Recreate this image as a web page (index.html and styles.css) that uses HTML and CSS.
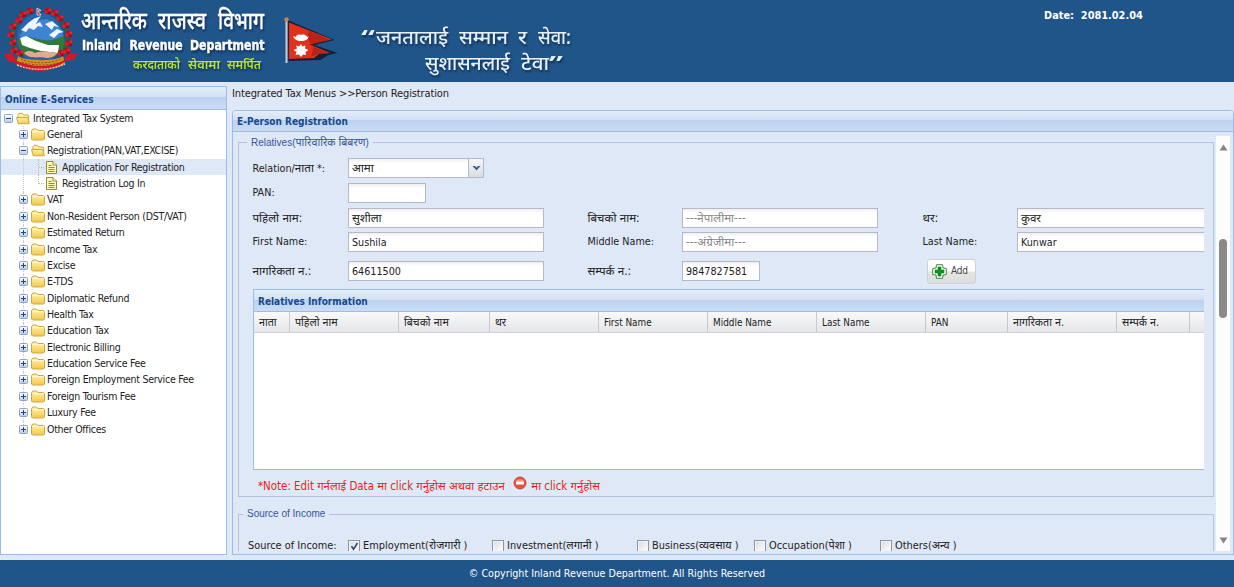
FILE: index.html
```html
<!DOCTYPE html>
<html lang="ne">
<head>
<meta charset="utf-8">
<title>Integrated Tax System</title>
<link rel="stylesheet" href="styles.css">
</head>
<body>
<svg class="defs" width="0" height="0">
  <defs>
    <linearGradient id="gold" x1="0" y1="0" x2="0" y2="1"><stop offset="0" stop-color="#fff3a8"/><stop offset="1" stop-color="#f3c94c"/></linearGradient>
    <linearGradient id="box" x1="0" y1="0" x2="0" y2="1"><stop offset="0" stop-color="#ffffff"/><stop offset="1" stop-color="#b9cbe2"/></linearGradient>
    <symbol id="plus" viewBox="0 0 9 9"><rect x=".5" y=".5" width="8" height="8" rx="1" fill="url(#box)" stroke="#8ca4c4"/><path d="M2 4.500h5M4.500 2v5" stroke="#24467c" fill="none"/></symbol>
    <symbol id="minus" viewBox="0 0 9 9"><rect x=".5" y=".5" width="8" height="8" rx="1" fill="url(#box)" stroke="#8ca4c4"/><path d="M2 4.500h5" stroke="#24467c" fill="none"/></symbol>
    <symbol id="folder" viewBox="0 0 14 13"><path d="M.5 11V2.800L1.800 1h3.700L7 2.500h5.500l1 1v7.500l-1 1H1.500z" fill="url(#gold)" stroke="#d0a548"/><path d="M1.500 3.700h11" stroke="#fffbd8" fill="none"/></symbol>
    <symbol id="open" viewBox="0 0 14 13"><path d="M2 6V2.500l1-1.200h3.200L7.600 3H12l.7 1v7" fill="#fff0a6" stroke="#d0a548"/><path d="M.6 5.500h11l1.700 6.200H2.200z" fill="url(#gold)" stroke="#d0a548"/></symbol>
    <symbol id="leaf" viewBox="0 0 11 13"><path d="M.5.5h6.500L10.500 4v8.500H.5z" fill="#fbf8b4" stroke="#8f8b42"/><path d="M7 .5V4h3.500" fill="#fff" stroke="#8f8b42"/><path d="M2.500 4.500h3M2.500 6.500h6M2.500 8.500h6M2.500 10.500h6" stroke="#8d8950" fill="none"/></symbol>
    <g id="bloom"><circle r="3.200" fill="#b5121f"/><circle cx="-2.200" cy="1" r="1.700" fill="#d62030"/><circle cx="1.800" cy="-1.200" r="1.600" fill="#dd2536"/><circle cx="1.500" cy="2" r="1.300" fill="#8f101b"/></g>
  </defs>
</svg>

<header class="banner">
  <svg class="brand" viewBox="0 0 600 82" width="600" height="82">
    <g>
      <ellipse cx="40" cy="38" rx="23" ry="25" fill="#2565ad"/>
      <path d="M19 36L29 22l6-4 5 2 7-1 6 4 9 7 2 8-24 4z" fill="#3f83d4"/>
      <path d="M21 30l7-7 7-5 3 2-2 4 4-2 3 5-5-1-4 4-5-2-3 4zM45 24l7-3 7 6-5-1-2 4zM49 35l8-6 7 3-5 1-5 5zM36 18l5-2-6 8z" fill="#eef5fc"/>
      <path d="M17 41l8-5 13 3 12 2 14-5 1 12-11 9-30-1z" fill="#2f7a3b"/>
      <path d="M20 38l6-2 10 5 12 4 11 0-1 8-8-1-9-1-11-3-8-3z" fill="#fff"/>
      <path d="M24 53c4-3 8-2 11 0 5-2 14-1 22 0-2 4-7 5-11 5-7-2-16 2-22-5z" fill="#e9a691"/>
      <path d="M18 56c5 5 38 6 45 0l2 8c-10 6-38 6-49 0z" fill="#d9901c"/>
      <path d="M21 59c9 5 31 5 40 0M22 62c10 4 30 4 38 0" stroke="#7f5510" stroke-width="1" stroke-dasharray="2 1.500" fill="none"/>
      <path d="M16 50C10 38 13 19 29 12M64 50c7-12 3-31-13-38" stroke="#24623a" stroke-width="3" fill="none"/>
      <use href="#bloom" x="30" y="11"/><use href="#bloom" x="23" y="14"/><use href="#bloom" x="19" y="20"/><use href="#bloom" x="13" y="26"/><use href="#bloom" x="11" y="34"/><use href="#bloom" x="13" y="42"/><use href="#bloom" x="14" y="50"/><use href="#bloom" x="20" y="53"/>
      <use href="#bloom" x="48" y="11"/><use href="#bloom" x="55" y="13"/><use href="#bloom" x="60" y="18"/><use href="#bloom" x="66" y="25"/><use href="#bloom" x="69" y="34"/><use href="#bloom" x="69" y="43"/><use href="#bloom" x="67" y="51"/><use href="#bloom" x="61" y="53"/>
      <path d="M37 8l4 2.500-3 .5 3 4h-4z" fill="#d7263c" stroke="#fff" stroke-width=".7"/>
      <path d="M4 54l8-1 5 8q24 10 46 0l7-8 8 1-5 6-7 1q-26 19-51 2l-7-2z" fill="#cf1a28"/>
      <path d="M17 65q24 9 48-1" stroke="#f6b9b5" stroke-width="1.500" stroke-dasharray="2 1" fill="none"/>
    </g>
    <g>
      <path d="M287.500 20l47 20-20 5 23 8-9 2-8 5-32 1z" fill="#142038"/>
      <path d="M289 22.500l43 17-22 5 20 8.500-11 1-5 4-25 1z" fill="#e2301d"/>
      <path d="M293 36l3 1c0-2 2-3 5-2 3-1 5 0 6 2l2-1c0 3-4 5-8 5s-7-2-8-5zM301 44l1.500 2.500 3-1-.5 3 3.500 1.500-3 2 .5 3-3-.5-2 2.500-2-2.500-3.500.5 1-3-3-2 3.500-1.500-1-3 3 1z" fill="#fff"/>
      <path d="M309 31q-4 10 5 14l-3 12 7-3 9-1-17-8 20-5z" fill="#8c160e" opacity=".5"/>
      <path d="M286.500 20v43" stroke="#c9cbd4" stroke-width="2"/><circle cx="286.500" cy="19.500" r="2.200" fill="#c48650"/>
    </g>
    <g class="shade">
      <text class="t-dept" x="81" y="29" textLength="66" lengthAdjust="spacingAndGlyphs">आन्तरिक</text>
      <text class="t-dept" x="158" y="29" textLength="48" lengthAdjust="spacingAndGlyphs">राजस्व</text>
      <text class="t-dept" x="218" y="29" textLength="46" lengthAdjust="spacingAndGlyphs">विभाग</text>
      <text class="t-en" x="82" y="49.500" textLength="39" lengthAdjust="spacingAndGlyphs">Inland</text>
      <text class="t-en" x="129.500" y="49.500" textLength="53" lengthAdjust="spacingAndGlyphs">Revenue</text>
      <text class="t-en" x="190" y="49.500" textLength="74.500" lengthAdjust="spacingAndGlyphs">Department</text>
      <text class="t-motto" x="133" y="69" textLength="47" lengthAdjust="spacingAndGlyphs">करदाताको</text>
      <text class="t-motto" x="188" y="69" textLength="32" lengthAdjust="spacingAndGlyphs">सेवामा</text>
      <text class="t-motto" x="227" y="69" textLength="34" lengthAdjust="spacingAndGlyphs">समर्पित</text>
      <text class="t-quote" x="361" y="44" textLength="14" lengthAdjust="spacingAndGlyphs">‘‘</text>
      <text class="t-quote" x="376" y="44" textLength="72" lengthAdjust="spacingAndGlyphs">जनतालाई</text>
      <text class="t-quote" x="459" y="44" textLength="49" lengthAdjust="spacingAndGlyphs">सम्मान</text>
      <text class="t-quote" x="518" y="44" textLength="9" lengthAdjust="spacingAndGlyphs">र</text>
      <text class="t-quote" x="538" y="44" textLength="33" lengthAdjust="spacingAndGlyphs">सेवा:</text>
      <text class="t-quote" x="425" y="70" textLength="85" lengthAdjust="spacingAndGlyphs">सुशासनलाई</text>
      <text class="t-quote" x="521" y="70" textLength="28" lengthAdjust="spacingAndGlyphs">टेवा</text>
      <text class="t-quote" x="549" y="70" textLength="14" lengthAdjust="spacingAndGlyphs">’’</text>
    </g>
  </svg>
  <div class="date">Date:&nbsp; 2081.02.04</div>
</header>

<div class="work">
  <aside class="side">
    <h2 class="bar">Online E-Services</h2>
    <ul class="tree">
      <li class="root"><svg class="tg"><use href="#minus"/></svg><svg class="fd"><use href="#open"/></svg>Integrated Tax System</li>
      <li><svg class="tg"><use href="#plus"/></svg><svg class="fd"><use href="#folder"/></svg>General</li>
      <li><svg class="tg"><use href="#minus"/></svg><svg class="fd"><use href="#open"/></svg>Registration(PAN,VAT,EXCISE)</li>
      <li class="leaf on"><i></i><svg class="lf"><use href="#leaf"/></svg>Application For Registration</li>
      <li class="leaf last"><i></i><svg class="lf"><use href="#leaf"/></svg>Registration Log In</li>
      <li><svg class="tg"><use href="#plus"/></svg><svg class="fd"><use href="#folder"/></svg>VAT</li>
      <li><svg class="tg"><use href="#plus"/></svg><svg class="fd"><use href="#folder"/></svg>Non-Resident Person (DST/VAT)</li>
      <li><svg class="tg"><use href="#plus"/></svg><svg class="fd"><use href="#folder"/></svg>Estimated Return</li>
      <li><svg class="tg"><use href="#plus"/></svg><svg class="fd"><use href="#folder"/></svg>Income Tax</li>
      <li><svg class="tg"><use href="#plus"/></svg><svg class="fd"><use href="#folder"/></svg>Excise</li>
      <li><svg class="tg"><use href="#plus"/></svg><svg class="fd"><use href="#folder"/></svg>E-TDS</li>
      <li><svg class="tg"><use href="#plus"/></svg><svg class="fd"><use href="#folder"/></svg>Diplomatic Refund</li>
      <li><svg class="tg"><use href="#plus"/></svg><svg class="fd"><use href="#folder"/></svg>Health Tax</li>
      <li><svg class="tg"><use href="#plus"/></svg><svg class="fd"><use href="#folder"/></svg>Education Tax</li>
      <li><svg class="tg"><use href="#plus"/></svg><svg class="fd"><use href="#folder"/></svg>Electronic Billing</li>
      <li><svg class="tg"><use href="#plus"/></svg><svg class="fd"><use href="#folder"/></svg>Education Service Fee</li>
      <li><svg class="tg"><use href="#plus"/></svg><svg class="fd"><use href="#folder"/></svg>Foreign Employment Service Fee</li>
      <li><svg class="tg"><use href="#plus"/></svg><svg class="fd"><use href="#folder"/></svg>Foreign Tourism Fee</li>
      <li><svg class="tg"><use href="#plus"/></svg><svg class="fd"><use href="#folder"/></svg>Luxury Fee</li>
      <li><svg class="tg"><use href="#plus"/></svg><svg class="fd"><use href="#folder"/></svg>Other Offices</li>
    </ul>
  </aside>

  <main class="main">
    <div class="crumb">Integrated Tax Menus &gt;&gt;Person Registration</div>
    <section class="panel">
      <h2 class="bar">E-Person Registration</h2>
      <div class="body">
        <div class="scroll">
          <fieldset class="rel">
            <legend>Relatives(<span>पारिवारिक बिबरण</span>)</legend>
            <div class="form">
              <label>Relation/<span class="dev">नाता</span> *:</label><div class="combo"><span class="fld dev">आमा</span><b><svg width="9" height="7" viewBox="0 0 9 7"><path d="M.5 1h2.500l1.500 1.500L6 1h2.500L4.500 5.500z" fill="#3b5a8c"/></svg></b></div><span class="fill"></span>
              <label>PAN:</label><span class="fld short"></span><span class="fill"></span>
              <label class="dev">पहिलो नाम:</label><span class="fld dev">सुशीला</span><label class="dev">बिचको नाम:</label><span class="fld dev hint">---नेपालीमा---</span><label class="dev">थर:</label><span class="fld dev wide">कुवर</span>
              <label>First Name:</label><span class="fld">Sushila</span><label>Middle Name:</label><span class="fld dev hint">---अंग्रेजीमा---</span><label>Last Name:</label><span class="fld wide">Kunwar</span>
              <label class="dev">नागरिकता न.:</label><span class="fld">64611500</span><label class="dev">सम्पर्क न.:</label><span class="fld short">9847827581</span>
              <div class="btn"><svg width="15" height="15" viewBox="0 0 15 15"><path d="M4.500.7h6l.5 3.300 3.300.5v6l-3.300.5-.5 3.300h-6L4 11l-3.300-.5v-6L4 4z" fill="#fff" stroke="#3a8a3f" stroke-linejoin="round"/><path d="M6 3h3v3h3v3H9v3H6V9H3V6h3z" fill="#109618" stroke="#0a7a12" stroke-width=".6"/></svg>Add</div>
            </div>
            <div class="grid">
              <h2 class="bar">Relatives Information</h2>
              <div class="cols"><span class="dev">नाता</span><span class="dev">पहिलो नाम</span><span class="dev">बिचको नाम</span><span class="dev">थर</span><span>First Name</span><span>Middle Name</span><span>Last Name</span><span>PAN</span><span class="dev">नागरिकता न.</span><span class="dev">सम्पर्क न.</span></div>
              <div class="rows"></div>
            </div>
            <p class="note">*Note: Edit गर्नलाई Data मा click गर्नुहोस अथवा हटाउन <svg width="14" height="14" viewBox="0 0 14 14"><circle cx="7" cy="7" r="6" fill="#e8523e" stroke="#c9483a"/><path d="M2.500 5.500a5 4 0 0 1 9 0z" fill="#f59b86"/><rect x="3" y="5.500" width="8" height="3" rx=".5" fill="#fff"/></svg> मा click गर्नुहोस</p>
          </fieldset>
          <fieldset class="src">
            <legend>Source of Income</legend>
            <div class="checks">
              <label>Source of Income:</label>
              <span><i class="cb"><svg width="9" height="9" viewBox="0 0 9 9"><path d="M1.500 4.200l2 3L7.500 1" fill="none" stroke="#2d4a83" stroke-width="1.600"/></svg></i>Employment(रोजगारी )</span>
              <span><i class="cb"></i>Investment(लगानी )</span>
              <span><i class="cb"></i>Business(व्यवसाय )</span>
              <span><i class="cb"></i>Occupation(पेशा )</span>
              <span><i class="cb"></i>Others(अन्य )</span>
            </div>
          </fieldset>
        </div>
        <div class="track"><svg width="9" height="7" viewBox="0 0 9 7"><path d="M4.500.5L8.500 6.500H.5z" fill="#858585"/></svg><div class="thumb"></div><svg class="down" width="9" height="7" viewBox="0 0 9 7"><path d="M4.500 6.500L8.500.5H.5z" fill="#858585"/></svg></div>
      </div>
    </section>
  </main>
</div>
<footer class="foot">© Copyright Inland Revenue Department. All Rights Reserved</footer>
</body>
</html>
```
FILE: styles.css
```css
* { box-sizing: border-box; }
body {
  margin: 0;
  width: 1234px;
  height: 587px;
  overflow: hidden;
  display: flex;
  flex-direction: column;
  background: #dfe8f6;
  font: 10.700px/16px "DejaVu Sans Condensed", "Noto Sans", sans-serif;
  color: #222;
  white-space: nowrap;
}
svg { flex: none; }
.defs { position: absolute; }
.dev { font-size: 11.600px; }

.banner { flex: none; height: 82px; background: #20558a; display: flex; justify-content: space-between; }
.brand { display: block; }
.date { width: 190px; padding-top: 8px; color: #fff; font-weight: bold; font-size: 10.900px; }
.shade { filter: drop-shadow(1px 2px 1px rgba(0, 20, 50, .6)); fill: #fff; }
.t-dept { font: 500 24px "Noto Sans", sans-serif; stroke: #fff; stroke-width: .3px; }
.t-en { font: bold 14px "DejaVu Sans Condensed", sans-serif; stroke: #fff; stroke-width: .4px; }
.t-motto { font: 600 13px "Noto Sans", sans-serif; fill: #b6e62e; }
.t-quote { font: 500 19px "Noto Sans", sans-serif; fill: #e8f1fb; }

.work { flex: none; height: 478px; display: flex; }
.bar {
  margin: 0;
  flex: none;
  height: 23px;
  padding: 2px 4px 0;
  font-size: 10px;
  line-height: 20px;
  color: #15498b;
  border-bottom: 1px solid #99bce8;
  background: linear-gradient(#e3edfa 0, #d3e1f4 45%, #bcd2ef 47%, #c9dcf5 100%);
}

.side { width: 227px; height: 469px; margin-top: 4px; border: 1px solid #99bce8; background: #fff; }
.side .bar { line-height: 21px; }
.tree { list-style: none; margin: 0; padding: 0; font-size: 10.500px; letter-spacing: -.28px; }
.tree li { display: flex; align-items: center; height: 16.370px; line-height: 15px; padding: 0 0 0 18px; position: relative; }
.tree li.root { padding-left: 3px; }
.tree li:not(.root)::before { content: ""; position: absolute; left: 22px; top: 0; bottom: 0; border-left: 1px dotted #ccc; }
.tree li:last-child::before { bottom: 8px; }
.tg { width: 9px; height: 9px; margin-right: 3px; position: relative; }
.fd { width: 14px; height: 13px; margin-right: 2px; }
.root .fd { margin-right: 3px; }
.lf { width: 11px; height: 13px; margin-right: 5px; }
.tree li.leaf { padding-left: 37px; }
.leaf i { width: 6px; height: 16px; margin-right: 2px; border-left: 1px dotted #bbb; background: linear-gradient(90deg, #bbb 50%, transparent 50%) 0 8px / 2px 1px repeat-x; }
.leaf.last i { height: 9px; align-self: flex-start; }
.tree li.on { background: #dfe8f6; }

.main { flex: 1; padding: 4px 0 0 5px; }
.crumb { height: 24px; font-size: 11px; letter-spacing: -.13px; line-height: 15px; }
.panel { height: 445px; border: 1px solid #99bce8; border-radius: 4px 4px 0 0; overflow: hidden; }
.panel > .bar { height: 21px; line-height: 18px; }
.body { height: 419px; padding-top: 4px; display: flex; justify-content: space-between; }
.scroll { width: 976px; margin-left: 5px; overflow: hidden; }
fieldset { margin: 0; min-width: 0; border: 1px solid #b5c3da; }
legend { height: 12px; padding: 0 4px; font: 10px/12px "Liberation Sans", "Noto Sans", sans-serif; color: #36559a; }
legend span { font-size: 10.700px; }
.rel { height: 361px; padding: 8px 9px 0 13px; overflow: hidden; }
.rel legend { margin-left: -5px; }
.form { display: grid; grid-template-columns: 96px 239px 95px 240px 95px 187px; grid-template-rows: 24px 25px 25px 24px 34px; align-items: center; width: 952px; overflow: hidden; }
.form label { padding-left: .5px; }
.fill { grid-column: 3 / -1; }
.fld { display: block; width: 196px; height: 20px; padding: 0 3px; line-height: 19px; border: 1px solid #b5b8c8; background: linear-gradient(#efefef, #fff 4px); }
.fld.short { width: 78px; }
.hint { color: #888; }
.combo { display: flex; }
.combo .fld { width: 121px; }
.combo b { width: 15px; height: 20px; display: grid; place-items: center; border: 1px solid #b5b8c8; border-left: 0; background: linear-gradient(#f7f7f7, #d8dde6); }
.btn { width: 49px; height: 25px; margin-left: 5px; padding-left: 4px; display: flex; align-items: center; gap: 4px; color: #444; font-size: 10px; letter-spacing: -.2px; border: 1px solid #d1d1d1; border-radius: 3px; background: linear-gradient(#fff 48%, #e6e6e6 52%, #dcdcdc); }
.grid { width: 951px; height: 181px; margin: 1px 0 0 1px; border: 1px solid #99bce8; border-right: 0; background: #fff; }
.grid .bar { height: 22px; line-height: 20px; }
.cols { display: grid; grid-template-columns: 36px 109px 91px 109px 109px 109px 109px 82px 109px 73px 1fr; height: 21px; border-bottom: 1px solid #d0d0d0; background: linear-gradient(#f9f9f9, #e4e6e9); font-size: 9.900px; line-height: 21px; }
.cols span { height: 20px; padding-left: 5px; border-right: 1px solid #c9c9cb; }
.cols .dev { font-size: 10.700px; }
.note { margin: 6px 0 0 6px; color: #ed1c24; font-size: 11.400px; line-height: 19px; }
.note svg { margin: 0 1px 0 5px; vertical-align: 0; }
.src { height: 80px; margin-top: 11px; padding: 18px 0 0 9px; }
.src legend { margin-left: -5px; }
.checks { display: grid; grid-template-columns: 100px 144px 145px 117px 126px 100px; height: 16px; align-items: center; font-size: 10.900px; }
.checks > span { display: flex; align-items: center; gap: 3px; height: 16px; }
.cb { width: 12px; height: 12px; display: grid; place-items: center; border: 1px solid #8d96a3; background: linear-gradient(135deg, #d8dbdf, #fff); box-shadow: inset 0 0 0 1px #f4f4f4; }
.track { width: 14px; margin-right: 3px; padding: 8px 0 7px; display: flex; flex-direction: column; align-items: center; background: #fcfcfc; }
.thumb { width: 8px; height: 79px; margin-top: 88px; border-radius: 4px; background: #8a8a8a; }
.down { margin-top: auto; }

.foot { flex: 1; background: #20558a; color: #fff; text-align: center; line-height: 28px; font-size: 10.650px; }
```
